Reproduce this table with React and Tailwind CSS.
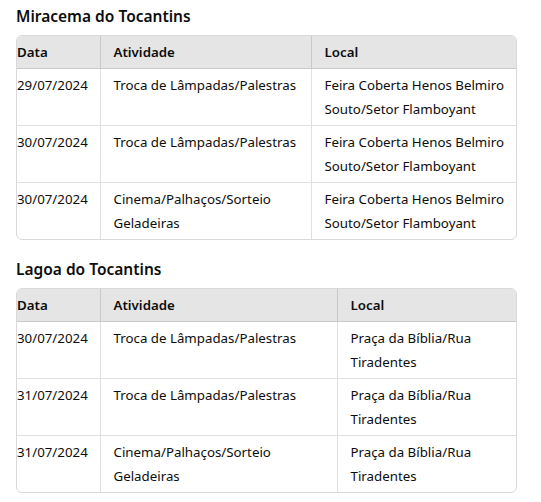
import React from 'react';

const sections = [
  {
    title: 'Miracema do Tocantins',
    widths: ['w-[83px]', 'w-[211px]', ''],
    rows: [
      ['29/07/2024', 'Troca de Lâmpadas/Palestras', 'Feira Coberta Henos Belmiro Souto/Setor Flamboyant'],
      ['30/07/2024', 'Troca de Lâmpadas/Palestras', 'Feira Coberta Henos Belmiro Souto/Setor Flamboyant'],
      ['30/07/2024', 'Cinema/Palhaços/Sorteio Geladeiras', 'Feira Coberta Henos Belmiro Souto/Setor Flamboyant'],
    ],
  },
  {
    title: 'Lagoa do Tocantins',
    widths: ['w-[83px]', 'w-[237px]', ''],
    rows: [
      ['30/07/2024', 'Troca de Lâmpadas/Palestras', 'Praça da Bíblia/Rua Tiradentes'],
      ['31/07/2024', 'Troca de Lâmpadas/Palestras', 'Praça da Bíblia/Rua Tiradentes'],
      ['31/07/2024', 'Cinema/Palhaços/Sorteio Geladeiras', 'Praça da Bíblia/Rua Tiradentes'],
    ],
  },
];

const Section = ({ title, widths, rows }) => (
  <div>
    <h3 className="text-[15.5px] leading-6 font-semibold pt-1 pb-[7px]">{title}</h3>
    <div className="border border-[#d9d9d9] rounded-[6px] overflow-hidden">
      <table className="w-full table-fixed border-collapse text-[13.3px] leading-6">
        <thead>
          <tr className="bg-[#e5e5e5] border-b border-[#c9c9c9]">
            <th className={`${widths[0]} text-left font-semibold py-1 px-0 border-r border-[#c9c9c9]`}>Data</th>
            <th className={`${widths[1]} text-left font-semibold py-1 pl-[13px] pr-2 border-r border-[#c9c9c9]`}>Atividade</th>
            <th className="text-left font-semibold py-1 pl-[13px] pr-2">Local</th>
          </tr>
        </thead>
        <tbody>
          {rows.map((r, i) => (
            <tr key={i} className={i < rows.length - 1 ? 'border-b border-[#e0e0e0]' : ''}>
              <td className="align-top py-1 px-0 border-r border-[#e0e0e0]">{r[0]}</td>
              <td className="align-top py-1 pl-[13px] pr-2 border-r border-[#e0e0e0]">{r[1]}</td>
              <td className="align-top py-1 pl-[13px] pr-2">{r[2]}</td>
            </tr>
          ))}
        </tbody>
      </table>
    </div>
  </div>
);

export default function App() {
  return (
    <div className="w-[541px] h-[502px] bg-white text-[#0d0d0d] px-4 pr-[24px] font-['Noto_Sans','Open_Sans',sans-serif] flex flex-col gap-[13px]">
      {sections.map((s) => (
        <Section key={s.title} {...s} />
      ))}
    </div>
  );
}
